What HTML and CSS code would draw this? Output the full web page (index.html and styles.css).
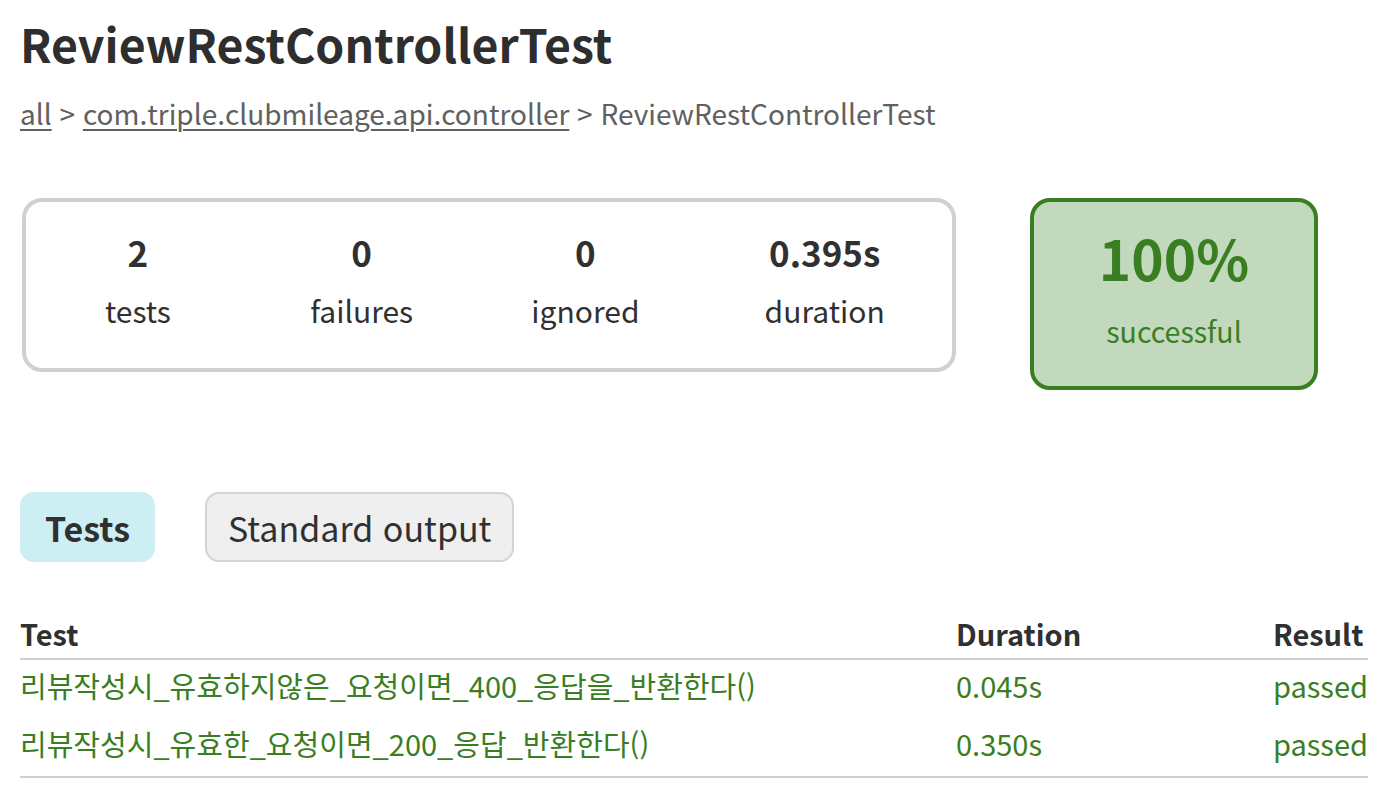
FILE: index.html
```html
<!DOCTYPE html>
<html lang="ko">
<head>
<meta charset="utf-8">
<title>Test results - ReviewRestControllerTest</title>
<link rel="stylesheet" href="styles.css">
</head>
<body>
<div class="content">
  <h1 class="title">ReviewRestControllerTest</h1>
  <div class="breadcrumbs">
    <a href="#">all</a> &gt; <a href="#">com.triple.clubmileage.api.controller</a> &gt; ReviewRestControllerTest
  </div>

  <div class="summary">
    <div class="summary-group">
      <div class="info-box">
        <div class="counter">2</div>
        <p>tests</p>
      </div>
      <div class="info-box">
        <div class="counter">0</div>
        <p>failures</p>
      </div>
      <div class="info-box">
        <div class="counter">0</div>
        <p>ignored</p>
      </div>
      <div class="info-box duration">
        <div class="counter">0.395s</div>
        <p>duration</p>
      </div>
    </div>
    <div class="success-rate">
      <div class="percent">100%</div>
      <p>successful</p>
    </div>
  </div>

  <ul class="tab-links">
    <li class="tab selected">Tests</li>
    <li class="tab">Standard output</li>
  </ul>

  <table class="results">
    <thead>
      <tr>
        <th class="col-test">Test</th>
        <th class="col-duration">Duration</th>
        <th class="col-result">Result</th>
      </tr>
    </thead>
    <tbody>
      <tr>
        <td class="col-test">리뷰작성시_유효하지않은_요청이면_400_응답을_반환한다()</td>
        <td class="col-duration">0.045s</td>
        <td class="col-result">passed</td>
      </tr>
      <tr>
        <td class="col-test">리뷰작성시_유효한_요청이면_200_응답_반환한다()</td>
        <td class="col-duration">0.350s</td>
        <td class="col-result">passed</td>
      </tr>
    </tbody>
  </table>
</div>
</body>
</html>
```

FILE: styles.css
```css
html, body {
  margin: 0;
  padding: 0;
  background: #ffffff;
}

body {
  font-family: "Noto Sans CJK KR", "Noto Sans", sans-serif;
  color: #303030;
  font-size: 30px;
}

.content {
  padding: 11px 32px 0 20px;
}

.title {
  margin: 0;
  font-size: 46.4px;
  line-height: 64px;
  font-weight: 700;
  color: #2e2e2e;
}

.breadcrumbs {
  margin-top: 18px;
  color: #606060;
  font-size: 28px;
  line-height: 40px;
}

.breadcrumbs a {
  color: #606060;
  text-decoration: underline;
  text-decoration-thickness: 2px;
  text-underline-offset: 4px;
}

.summary {
  display: flex;
  align-items: flex-start;
  margin-top: 65px;
  margin-left: 2px;
}

.summary-group {
  display: flex;
  box-sizing: border-box;
  width: 934px;
  height: 174px;
  border: 4px solid #d0d0d0;
  border-radius: 20px;
}

.info-box {
  width: 224px;
  text-align: center;
  padding-top: 21px;
}

.info-box.duration {
  width: 255px;
}

.counter {
  font-size: 35px;
  font-weight: 700;
  line-height: 58px;
  margin-bottom: 7px;
}

.info-box p {
  margin: 0;
  font-size: 30px;
  line-height: 44px;
}

.success-rate {
  box-sizing: border-box;
  width: 288px;
  height: 192px;
  margin-left: 74px;
  background: #c2d9bd;
  border: 4px solid #3a7e23;
  border-radius: 20px;
  text-align: center;
  color: #3a7e23;
  padding-top: 15px;
}

.percent {
  font-size: 55px;
  font-weight: 700;
  line-height: 80px;
  margin-bottom: 12px;
}

.success-rate p {
  margin: 0;
  font-size: 28.5px;
  line-height: 44px;
}

.tab-links {
  display: flex;
  gap: 50px;
  list-style: none;
  padding: 0;
  margin: 102px 0 0 0;
}

.tab {
  box-sizing: border-box;
  height: 70px;
  padding: 0 21px;
  display: flex;
  align-items: center;
  border: 2px solid #d4d4d4;
  border-radius: 14px;
  background: #efefef;
  font-size: 34px;
  color: #303030;
}

.tab.selected {
  padding: 0 23px;
  background: #cdeef3;
  border-color: #cdeef3;
  font-weight: 700;
}

.results {
  width: 100%;
  margin-top: 48px;
  border-collapse: collapse;
  border-bottom: 2px solid #d0d0d0;
}

.results th {
  text-align: left;
  font-weight: 700;
  font-size: 29px;
  line-height: 46px;
  padding: 0 0 2px 0;
  border-bottom: 2px solid #d0d0d0;
}

.results td {
  text-align: left;
  font-size: 29px;
  line-height: 50px;
  padding: 0 0 8px 0;
  color: #3a7e23;
  white-space: nowrap;
}

.results .col-duration {
  width: 317px;
}

.results .col-result {
  width: 94px;
}
```
